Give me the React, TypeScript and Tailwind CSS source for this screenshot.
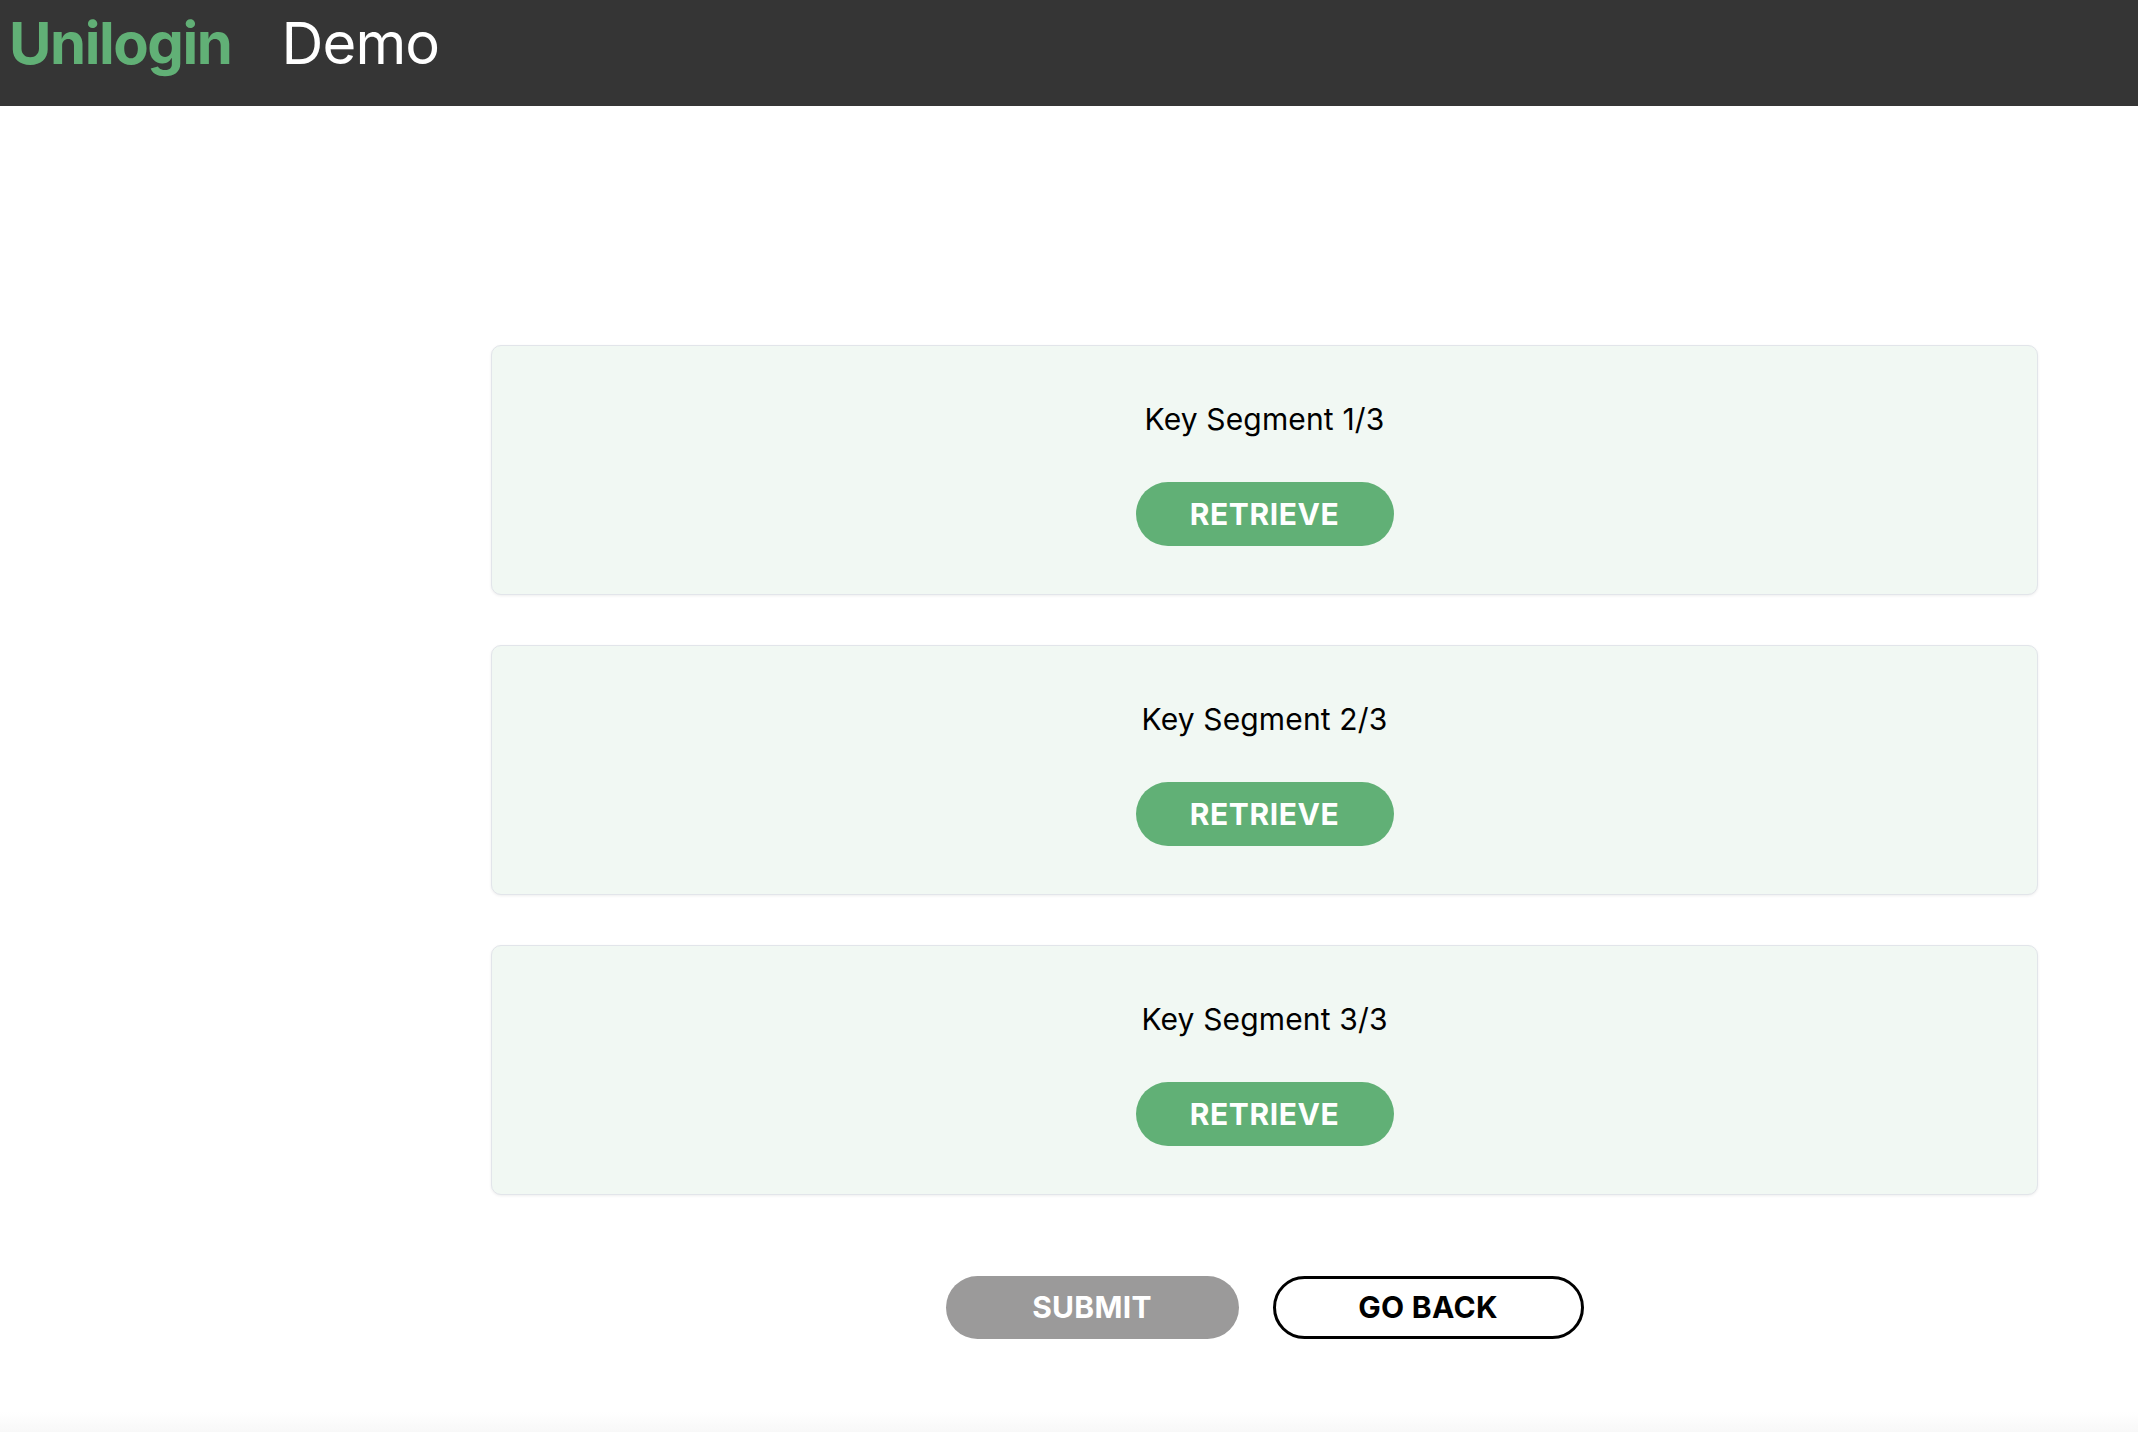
const segments = ["Key Segment 1/3", "Key Segment 2/3", "Key Segment 3/3"];

export default function App() {
  return (
    <div className="min-h-screen bg-white font-['Inter',sans-serif] flex flex-col">
      {/* header */}
      <header className="h-[106px] bg-[#353535] flex items-start pt-[14px] pl-[9px]">
        <span className="text-[58px] leading-none font-bold text-[#61b076] tracking-[-0.025em]">Unilogin</span>
        <span className="ml-[50px] text-[58px] leading-none font-normal text-white tracking-[-0.015em]">Demo</span>
      </header>

      <main className="flex-1 pt-[239px] pl-[491px] pr-[100px]">
        <div className="flex flex-col gap-[50px]">
          {segments.map((label) => (
            <div
              key={label}
              className="h-[250px] rounded-[10px] border border-[#e2e5ea] bg-[#f1f8f3] shadow-[0_1px_3px_rgba(0,0,0,0.07)] flex flex-col items-center pt-[55px]"
            >
              <div className="text-[30px] leading-[36px] text-black tracking-[0.005em]">{label}</div>
              <button className="mt-[45px] h-[64px] w-[258px] rounded-full bg-[#61b076] text-white text-[30px] font-bold tracking-[0.02em]">
                RETRIEVE
              </button>
            </div>
          ))}
        </div>

        <div className="mt-[81px] flex justify-center gap-[34px]">
          <button className="h-[63px] w-[293px] rounded-full bg-[#9b9a9a] text-white text-[30px] font-bold tracking-[0.01em]">
            SUBMIT
          </button>
          <button className="h-[63px] w-[311px] rounded-full border-[3px] border-black bg-white text-black text-[30px] font-bold tracking-[0.01em]">
            GO BACK
          </button>
        </div>
      </main>

      <footer className="mt-[72px] h-[20px] bg-gradient-to-b from-white to-[#f8f8f8]" />
    </div>
  );
}
